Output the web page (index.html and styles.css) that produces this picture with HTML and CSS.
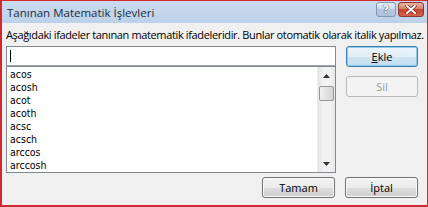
FILE: index.html
```html
<!DOCTYPE html>
<html lang="tr">
<head>
<meta charset="utf-8">
<link rel="stylesheet" href="styles.css">
</head>
<body>
<div class="window">
  <div class="titlebar">
    <span class="title">Tanınan Matematik İşlevleri</span>
    <div class="caption-btns">
      <div class="cap help">?</div>
      <div class="cap close">
        <svg width="12" height="9" viewBox="0 0 12 9"><path d="M2 1 L10 8 M10 1 L2 8" stroke="#6b1f18" stroke-width="3.2" stroke-linecap="round"/><path d="M2 1 L10 8 M10 1 L2 8" stroke="#ffffff" stroke-width="2" stroke-linecap="round"/></svg>
      </div>
    </div>
  </div>
  <div class="content">
    <p class="desc">Aşağıdaki ifadeler tanınan matematik ifadeleridir. Bunlar otomatik olarak italik yapılmaz.</p>
    <div class="main">
      <div class="left">
        <div class="input"><span class="caret"></span></div>
        <div class="list">
          <ul class="items">
            <li>acos</li>
            <li>acosh</li>
            <li>acot</li>
            <li>acoth</li>
            <li>acsc</li>
            <li>acsch</li>
            <li>arccos</li>
            <li>arccosh</li>
          </ul>
          <div class="scrollbar">
            <div class="arrow"><svg width="7" height="4" viewBox="0 0 7 4"><path d="M0 4 L3.5 0 L7 4 Z" fill="#333"/></svg></div>
            <div class="thumb"></div>
            <div class="spacer"></div>
            <div class="arrow"><svg width="7" height="4" viewBox="0 0 7 4"><path d="M0 0 L3.5 4 L7 0 Z" fill="#333"/></svg></div>
          </div>
        </div>
      </div>
      <div class="right">
        <button class="btn default"><u>E</u>kle</button>
        <button class="btn disabled">Sil</button>
      </div>
    </div>
    <div class="footer">
      <button class="btn">Tamam</button>
      <button class="btn">İptal</button>
    </div>
  </div>
</div>
</body>
</html>
```
FILE: styles.css
```css
html, body {
  margin: 0;
  padding: 0;
  background: #ffffff;
}
.window {
  width: 428px;
  height: 207px;
  box-sizing: border-box;
  border: 1px solid #d6262e;
  border-left-width: 2px;
  border-bottom-width: 2px;
  background: #f0f0f0;
  font-family: "Open Sans", "Noto Sans", sans-serif;
  font-size: 11px;
  color: #000;
  overflow: hidden;
}
.titlebar {
  height: 22px;
  display: flex;
  align-items: center;
  padding: 0 3px 0 5px;
  background: linear-gradient(#c9dbef, #bcd1e9);
}
.title {
  font-size: 11.5px;
  color: #1e2a36;
}
.caption-btns {
  margin-left: auto;
  align-self: flex-start;
  margin-top: 1px;
  display: flex;
  gap: 2px;
}
.cap {
  height: 15px;
  box-sizing: border-box;
  border-radius: 3px;
  display: flex;
  align-items: center;
  justify-content: center;
}
.help {
  width: 20px;
  border: 1px solid #8296b2;
  background: linear-gradient(#e6eef8, #c9d8eb 50%, #b4c8e2 50%, #aec3df);
  color: #fff;
  font-family: "DejaVu Sans", sans-serif;
  font-weight: bold;
  font-size: 11px;
  text-shadow: 0 0 1px #33455e, 0 0 1px #33455e;
}
.close {
  width: 26px;
  border: 1px solid #8a3a30;
  background: linear-gradient(#eab2a4, #d67a66 50%, #c6452f 50%, #d2644c);
}
.content {
  padding: 0 9px 0 4px;
}
.desc {
  margin: 4px 0 0;
  height: 15px;
  line-height: 15px;
  white-space: nowrap;
  letter-spacing: -0.36px;
}
.main {
  margin-top: 4px;
  display: flex;
  gap: 10px;
}
.left {
  width: 330px;
}
.input {
  height: 20px;
  box-sizing: border-box;
  border: 1px solid #858a91;
  border-bottom-color: #a0a4aa;
  background: #fff;
  padding: 3px 0 0 3px;
}
.caret {
  display: block;
  width: 1px;
  height: 12px;
  background: #000;
}
.list {
  height: 107px;
  box-sizing: border-box;
  border: 1px solid #828790;
  background: #fff;
  display: flex;
}
.items {
  flex: 1;
  list-style: none;
  margin: 0;
  padding: 1px 0 0 3px;
  font-family: "DejaVu Sans Condensed", "DejaVu Sans", sans-serif;
  font-stretch: condensed;
  font-size: 10.5px;
  line-height: 13px;
}
.scrollbar {
  width: 17px;
  background: linear-gradient(90deg, #e3e3e3, #f2f2f2 30%, #f2f2f2 70%, #e8e8e8);
  border-left: 1px solid #ececec;
  display: flex;
  flex-direction: column;
}
.arrow {
  height: 17px;
  display: flex;
  align-items: center;
  justify-content: center;
}
.thumb {
  margin: 2px 1px 0;
  height: 15px;
  box-sizing: border-box;
  border: 1px solid #979797;
  border-radius: 2px;
  background: linear-gradient(90deg, #f0f0f0, #e2e2e2 50%, #d4d4d4);
}
.spacer {
  flex: 1;
}
.right {
  width: 72px;
  display: flex;
  flex-direction: column;
  gap: 9px;
}
.btn {
  height: 21px;
  width: 73px;
  box-sizing: border-box;
  border: 1px solid #707070;
  border-radius: 3px;
  background: linear-gradient(#f2f2f2, #ebebeb 50%, #dddddd 50%, #cfcfcf);
  box-shadow: inset 0 0 0 1px #fbfbfb;
  font-family: "Open Sans", "Noto Sans", sans-serif;
  font-size: 11px;
  color: #000;
  padding: 0;
  line-height: 17px;
}
.right .btn {
  width: 72px;
}
.btn.default {
  border-color: #3c7fb1;
  background: linear-gradient(#edf6fb, #dfeef7 50%, #cfe5f2 50%, #c3def0);
  box-shadow: inset 0 0 0 1px #8fc9ea;
}
.btn.disabled {
  border-color: #b5b9bc;
  background: #f4f4f4;
  box-shadow: none;
  color: #9a9a9a;
}
.footer {
  margin-top: 4px;
  display: flex;
  justify-content: flex-end;
  gap: 10px;
}
```
